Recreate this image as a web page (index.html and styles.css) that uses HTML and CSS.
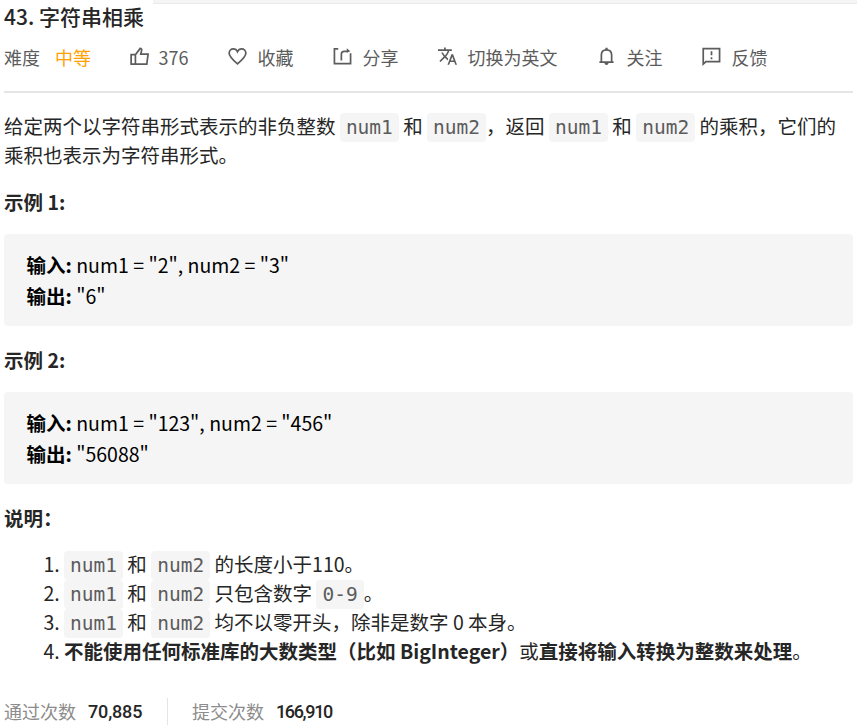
FILE: index.html
```html
<!DOCTYPE html>
<html lang="zh-CN">
<head>
<meta charset="utf-8">
<title>43. 字符串相乘</title>
<link rel="stylesheet" href="styles.css">
</head>
<body>
<div class="topbar"></div>
<main class="problem">
  <h1 class="title">43. 字符串相乘</h1>
  <div class="meta">
    <span class="label">难度</span><span class="level">中等</span>
    <span class="action first"><svg viewBox="0 0 20 20"><path d="M1.200 8h4.500v10H1.200zM5.700 8.200 10.700 1.500c1.200 0 1.800.9 1.500 2.100L11.300 7.500h7.700L17.700 18H5.700"/></svg>376</span>
    <span class="action"><svg viewBox="0 0 20 20"><path d="M10 17.800C5 13.500 1.200 10.300 1.200 6.600 1.200 3.800 3.300 2 5.600 2 7.500 2 9.200 3.200 10 5 10.800 3.200 12.500 2 14.400 2 16.700 2 18.800 3.800 18.800 6.600 18.800 10.300 15 13.500 10 17.800Z"/></svg>收藏</span>
    <span class="action"><svg viewBox="0 0 20 20"><path d="M5.500 2H1.500v15.500h17V6.500M8.800 14.200V7.500q0-3 3-3H16"/><path class="solid" d="M14.500 1.200 18.200 4.500 14.500 6z"/></svg>分享</span>
    <span class="action"><svg viewBox="1 1.500 22 22"><path class="solid" d="M12.870 15.070l-2.540-2.510.030-.030c1.740-1.940 2.980-4.170 3.710-6.530H17V4h-7V2H8v2H1v1.990h11.170C11.500 7.920 10.440 9.750 9 11.350 8.070 10.320 7.300 9.190 6.690 8h-2c.730 1.630 1.730 3.170 2.980 4.560l-5.090 5.020L4 19l5-5 3.110 3.110.760-2.040zM18.500 10h-2L12 22h2l1.120-3h4.750L21 22h2l-4.500-12zm-2.620 7l1.620-4.330L19.120 17h-3.240z"/></svg>切换为英文</span>
    <span class="action"><svg viewBox="0 0 20 20"><path d="M2.500 16h15M4.600 16V8.500C4.600 5.200 6.800 3 10 3s5.400 2.200 5.400 5.500V16"/><path class="solid" d="M8.800.8h2.400v2.500H8.800zM7.800 16.800h4.400Q12 19 10 19 8 19 7.800 16.800Z"/></svg>关注</span>
    <span class="action"><svg viewBox="0 0 20 20"><path d="M1.300 18V1.700h17.200v13.600H4.200z"/><path d="M10 4.500v4.300M10 10.800v2"/></svg>反馈</span>
  </div>
  <section class="content">
    <p>给定两个以字符串形式表示的非负整数 <code>num1</code> 和 <code>num2</code>，返回 <code>num1</code> 和 <code>num2</code> 的乘积，它们的乘积也表示为字符串形式。</p>
    <p><strong>示例 1:</strong></p>
    <pre><strong>输入:</strong> num1 = "2", num2 = "3"
<strong>输出:</strong> "6"</pre>
    <p><strong>示例 2:</strong></p>
    <pre><strong>输入:</strong> num1 = "123", num2 = "456"
<strong>输出:</strong> "56088"</pre>
    <p><strong>说明：</strong></p>
    <ol>
      <li><code>num1</code> 和 <code>num2</code> 的长度小于110。</li>
      <li><code>num1</code> 和 <code>num2</code> 只包含数字 <code>0-9</code>。</li>
      <li><code>num1</code> 和 <code>num2</code> 均不以零开头，除非是数字 0 本身。</li>
      <li><strong>不能使用任何标准库的大数类型（比如 BigInteger）</strong>或<strong>直接将输入转换为整数来处理</strong>。</li>
    </ol>
  </section>
  <footer class="stats">
    <span>通过次数</span><b>70,885</b>
    <i class="divider"></i>
    <span>提交次数</span><b class="tight">166,910</b>
  </footer>
</main>
</body>
</html>
```

FILE: styles.css
```css
* { box-sizing: border-box; }
body {
  margin: 0;
  height: 727px;
  overflow: hidden;
  background: #fff;
  color: #262626;
  font: 19.5px/29px "Noto Sans CJK SC", sans-serif;
}
.topbar {
  height: 4px;
  margin-left: 153px;
  background: #f5f5f5;
  border-bottom: 1px solid #eaeaea;
}
.problem { padding: 0 4px; }
.title {
  margin: 0;
  height: 32px;
  font-size: 21px;
  line-height: 25px;
  font-weight: 500;
}
.meta {
  display: flex;
  align-items: center;
  height: 57px;
  padding-bottom: 13px;
  border-bottom: 2px solid #e5e5e5;
  color: #5c5c5c;
  font-size: 18px;
  white-space: nowrap;
}
.level { margin-left: 15px; color: #ffa100; }
.action { display: flex; align-items: center; margin-left: 40px; }
.action.first { margin-left: 38.5px; }
.action svg {
  width: 19px;
  height: 19px;
  margin-right: 10px;
  margin-top: -2px;
  fill: none;
  stroke: #5c5c5c;
  stroke-width: 1.8;
  overflow: visible;
}
.action .solid { fill: #5c5c5c; stroke: none; }
.content { padding-top: 18px; }
.content p { margin: 0 0 18px; }
.content code {
  padding: 3px 6px;
  border-radius: 4px;
  background: #f5f5f5;
  color: #5c5c5c;
  font: 19.5px/1 "DejaVu Sans Mono", monospace;
}
.content pre {
  margin: 0 0 19px;
  height: 92px;
  padding: 15px 22.5px;
  border-radius: 4px;
  background: #f5f5f5;
  color: #000;
  font: 19.5px/31px "Noto Sans CJK SC", sans-serif;
}
.content ol { margin: -1px 0 0; padding-left: 60px; }
.stats {
  display: flex;
  align-items: center;
  height: 29px;
  margin-top: 32px;
  font-size: 18px;
  line-height: 27px;
  color: #8c8c8c;
}
.stats b {
  margin-left: 12px;
  color: #262626;
  font-family: Roboto, sans-serif;
  font-weight: 500;
  letter-spacing: -0.15px;
}
.stats .tight { letter-spacing: -1.35px; }
.divider { width: 1px; height: 27px; margin: 0 24px 0 24.7px; background: #e5e5e5; }
```
